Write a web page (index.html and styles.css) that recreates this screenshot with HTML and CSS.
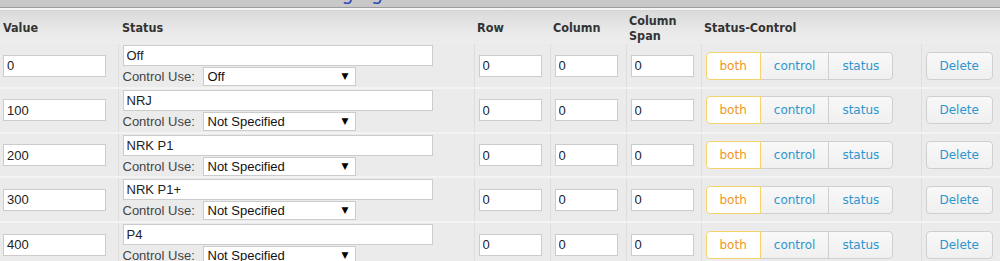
FILE: index.html
```html
<!DOCTYPE html>
<html lang="en">
<head>
    <meta charset="UTF-8">
    <meta name="viewport" content="width=device-width, initial-scale=1.0">
    <title>Status Mapping</title>
    <link rel="stylesheet" href="styles.css">
</head>
<body>
    <div class="tabbar">
        <span class="tab-title">Messaging</span>
    </div>
    <div class="rule"></div>

    <table class="mapping">
        <colgroup>
            <col class="c-value">
            <col class="c-status">
            <col class="c-num">
            <col class="c-num">
            <col class="c-span">
            <col class="c-ctrl">
            <col class="c-del">
        </colgroup>
        <thead>
            <tr>
                <th>Value</th>
                <th>Status</th>
                <th>Row</th>
                <th>Column</th>
                <th>Column<br>Span</th>
                <th>Status-Control</th>
                <th></th>
            </tr>
        </thead>
        <tbody>
            <tr>
                <td class="value"><input class="txt val" type="text" value="0"></td>
                <td class="status">
                    <input class="txt name" type="text" value="Off">
                    <div class="use">
                        <label>Control Use:</label>
                        <span class="pick"><select><option>Off</option><option>Not Specified</option></select></span>
                    </div>
                </td>
                <td><input class="txt num" type="text" value="0"></td>
                <td><input class="txt num" type="text" value="0"></td>
                <td><input class="txt num" type="text" value="0"></td>
                <td class="ctrl">
                    <div class="seg"><button class="on">both</button><button>control</button><button>status</button></div>
                </td>
                <td class="del"><button class="btn">Delete</button></td>
            </tr>
            <tr>
                <td class="value"><input class="txt val" type="text" value="100"></td>
                <td class="status">
                    <input class="txt name" type="text" value="NRJ">
                    <div class="use">
                        <label>Control Use:</label>
                        <span class="pick"><select><option>Not Specified</option><option>Off</option></select></span>
                    </div>
                </td>
                <td><input class="txt num" type="text" value="0"></td>
                <td><input class="txt num" type="text" value="0"></td>
                <td><input class="txt num" type="text" value="0"></td>
                <td class="ctrl">
                    <div class="seg"><button class="on">both</button><button>control</button><button>status</button></div>
                </td>
                <td class="del"><button class="btn">Delete</button></td>
            </tr>
            <tr>
                <td class="value"><input class="txt val" type="text" value="200"></td>
                <td class="status">
                    <input class="txt name" type="text" value="NRK P1">
                    <div class="use">
                        <label>Control Use:</label>
                        <span class="pick"><select><option>Not Specified</option><option>Off</option></select></span>
                    </div>
                </td>
                <td><input class="txt num" type="text" value="0"></td>
                <td><input class="txt num" type="text" value="0"></td>
                <td><input class="txt num" type="text" value="0"></td>
                <td class="ctrl">
                    <div class="seg"><button class="on">both</button><button>control</button><button>status</button></div>
                </td>
                <td class="del"><button class="btn">Delete</button></td>
            </tr>
            <tr>
                <td class="value"><input class="txt val" type="text" value="300"></td>
                <td class="status">
                    <input class="txt name" type="text" value="NRK P1+">
                    <div class="use">
                        <label>Control Use:</label>
                        <span class="pick"><select><option>Not Specified</option><option>Off</option></select></span>
                    </div>
                </td>
                <td><input class="txt num" type="text" value="0"></td>
                <td><input class="txt num" type="text" value="0"></td>
                <td><input class="txt num" type="text" value="0"></td>
                <td class="ctrl">
                    <div class="seg"><button class="on">both</button><button>control</button><button>status</button></div>
                </td>
                <td class="del"><button class="btn">Delete</button></td>
            </tr>
            <tr>
                <td class="value"><input class="txt val" type="text" value="400"></td>
                <td class="status">
                    <input class="txt name" type="text" value="P4">
                    <div class="use">
                        <label>Control Use:</label>
                        <span class="pick"><select><option>Not Specified</option><option>Off</option></select></span>
                    </div>
                </td>
                <td><input class="txt num" type="text" value="0"></td>
                <td><input class="txt num" type="text" value="0"></td>
                <td><input class="txt num" type="text" value="0"></td>
                <td class="ctrl">
                    <div class="seg"><button class="on">both</button><button>control</button><button>status</button></div>
                </td>
                <td class="del"><button class="btn">Delete</button></td>
            </tr>
        </tbody>
    </table>
</body>
</html>
```

FILE: styles.css
```css
body {
    margin: 0;
    background: #ebebeb;
    font-family: "Liberation Sans", Arial, sans-serif;
    font-size: 13px;
    color: #222;
    overflow: hidden;
}

.tabbar {
    height: 7px;
    background: #c8c8c8;
    border-bottom: 1px solid #9c9c9c;
    overflow: hidden;
}

.tab-title {
    display: block;
    margin: -18px 0 0 282px;
    font-family: "DejaVu Sans", Verdana, sans-serif;
    font-size: 19px;
    line-height: 22px;
    color: #2a46b4;
}

.rule {
    height: 2px;
    background: #f4f4f4;
    border-bottom: 1px solid #d4d4d4;
}

.mapping {
    width: 1000px;
    table-layout: fixed;
    border-collapse: collapse;
}

.c-value { width: 118px; }
.c-status { width: 356px; }
.c-num { width: 76px; }
.c-span { width: 75px; }
.c-ctrl { width: 220px; }
.c-del { width: 79px; }

thead th {
    height: 33px;
    padding: 0 3px;
    text-align: left;
    vertical-align: middle;
    font-family: "DejaVu Sans Condensed", "DejaVu Sans", sans-serif;
    font-weight: bold;
    font-size: 12.5px;
    line-height: 15px;
    color: #333;
    background: linear-gradient(#dadada, #e9e9e9 60%, #ededed);
}

thead th:nth-child(2) { padding-left: 4px; }

tbody td {
    padding: 1px 4px 0.75px 4px;
    vertical-align: middle;
    background: #ebebeb;
    border-top: 2px solid #f3f3f3;
    border-left: 1px solid #dedede;
}

tbody tr:first-child td { border-top: 0; }

tbody td:first-child {
    border-left: 0;
    padding-left: 3px;
}

.txt {
    box-sizing: border-box;
    height: 22px;
    margin: 0;
    padding: 0 3px;
    border: 1px solid #cccccc;
    background: #fff;
    font-family: "Liberation Sans", Arial, sans-serif;
    font-size: 13px;
    color: #222;
    outline: none;
    display: block;
}

.name { height: 21px; }
.val { width: 103px; }
.name { width: 310px; }
.num { width: 63px; }

.use {
    display: flex;
    align-items: center;
    margin-top: 1px;
    height: 19px;
}

.use label {
    width: 80px;
    color: #444;
}

.pick {
    position: relative;
    display: block;
}

.pick select {
    appearance: none;
    -webkit-appearance: none;
    box-sizing: border-box;
    width: 153px;
    height: 19px;
    margin: 0;
    padding: 0 0 0 4px;
    border: 1px solid #cccccc;
    border-radius: 0;
    background: #fff;
    font-family: "Liberation Sans", Arial, sans-serif;
    font-size: 13px;
    color: #111;
    display: block;
}

.pick::after {
    content: "\25BC";
    position: absolute;
    right: 7px;
    top: 5px;
    font-family: "DejaVu Sans", sans-serif;
    font-size: 9px;
    line-height: 9px;
    color: #000;
    pointer-events: none;
}

td.ctrl { padding-left: 4px; }

.seg {
    display: flex;
}

.seg button,
.btn {
    box-sizing: border-box;
    height: 28px;
    margin: 0;
    padding: 0 13px;
    border: 1px solid #cfcfcf;
    background: linear-gradient(#f8f8f8, #f0f0f0);
    font-family: "DejaVu Sans", Verdana, sans-serif;
    font-size: 12px;
    color: #2d96cf;
    cursor: pointer;
}

.seg button {
    border-radius: 0;
    margin-left: -1px;
}

.seg button:first-child {
    margin-left: 0;
    border-radius: 4px 0 0 4px;
}

.seg button:last-child {
    border-radius: 0 4px 4px 0;
}

.seg button.on {
    background: #fff;
    border-color: #f5d46e;
    color: #f0961e;
    position: relative;
}

.btn {
    border-radius: 4px;
}
```
